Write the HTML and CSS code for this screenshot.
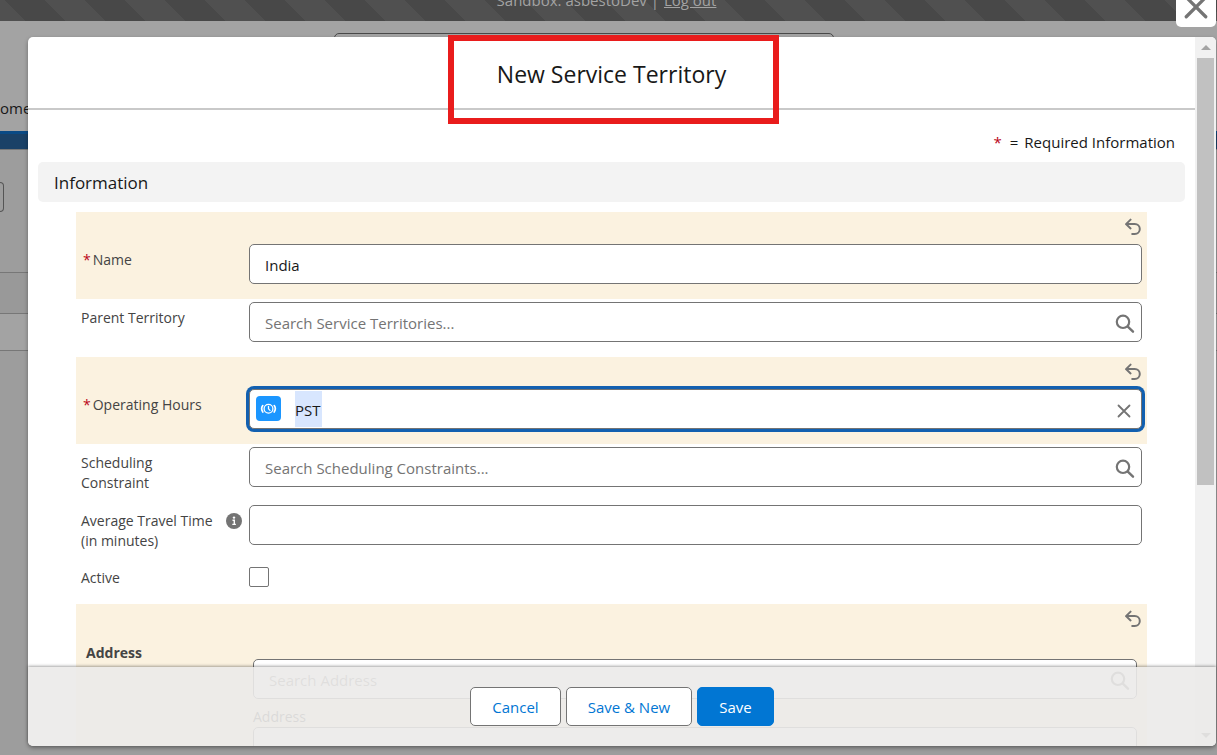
FILE: index.html
```html
<!DOCTYPE html>
<html lang="en">
<head>
<meta charset="utf-8">
<meta name="viewport" content="width=device-width, initial-scale=1">
<title>New Service Territory</title>
<link rel="stylesheet" href="styles.css">
</head>
<body>
<svg class="defs" width="0" height="0" aria-hidden="true">
  <symbol id="i-undo" viewBox="0 0 18 18"><path d="M6.600 1.600 2 6.100l4.600 4.300M2.500 6h8.300a4.900 4.900 0 0 1 0 10H8.200" fill="none" stroke="currentColor" stroke-width="2" stroke-linecap="round" stroke-linejoin="round"/></symbol>
  <symbol id="i-search" viewBox="0 0 20 20"><circle cx="8" cy="7.800" r="6.200" fill="none" stroke="currentColor" stroke-width="2.200"/><path d="m12.800 12.600 5.200 5.100" fill="none" stroke="currentColor" stroke-width="2.400" stroke-linecap="round"/></symbol>
  <symbol id="i-close" viewBox="0 0 24 24"><path d="m3 3 18 18M21 3 3 21" fill="none" stroke="currentColor" stroke-width="3" stroke-linecap="round"/></symbol>
  <symbol id="i-clear" viewBox="0 0 14 14"><path d="m1.500 1.500 11 11M12.500 1.500l-11 11" fill="none" stroke="currentColor" stroke-width="1.800" stroke-linecap="round"/></symbol>
</svg>

<div class="page">
  <div class="banner">Sandbox: asbestoDev | <a href="#">Log out</a></div>
  <div class="topbar">
    <div class="searchbox"></div>
    <div class="tab">ome</div>
  </div>
  <div class="ribbon"></div>
  <div class="content">
    <div class="pill"></div>
    <div class="band"></div>
    <div class="band band-light"></div>
  </div>
</div>

<button class="dismiss" type="button" aria-label="Close"><svg width="26" height="26"><use href="#i-close"/></svg></button>

<form class="modal" role="dialog" aria-labelledby="title">
  <div class="scroller">
    <div class="pane">
      <header class="head">
        <h1 id="title">New Service Territory</h1>
      </header>
      <p class="required"><span class="star">*</span><span>=</span><span>Required Information</span></p>
      <h2 class="section">Information</h2>

      <div class="rows">
        <div class="row changed">
          <label class="label" for="name"><span class="star">*</span>Name</label>
          <div class="field"><input class="box" id="name" type="text" value="India"></div>
          <button class="undo" type="button" aria-label="Undo Name"><svg width="18" height="18"><use href="#i-undo"/></svg></button>
        </div>
        <div class="row">
          <label class="label" for="parent">Parent Territory</label>
          <div class="field"><input class="box" id="parent" type="text" placeholder="Search Service Territories..."><svg class="glass" width="20" height="20"><use href="#i-search"/></svg></div>
        </div>
        <div class="row changed">
          <label class="label" for="hours"><span class="star">*</span>Operating Hours</label>
          <div class="field">
            <input class="box picked" id="hours" type="text" value="PST">
            <svg class="badge" width="25" height="25" viewBox="0 0 25 25" aria-hidden="true">
              <rect width="25" height="25" rx="4" fill="#1b96ff"/>
              <g fill="none" stroke="#fff" stroke-width="1.300" stroke-linecap="round" stroke-linejoin="round"><circle cx="12.500" cy="12.800" r="4.400"/><path d="M12.500 10.400v2.500l1.500 1.500"/><path d="M6.800 9.600q-2.300 3.200 0 6.400M18.200 9.600q2.300 3.200 0 6.400" stroke-width="1.700"/></g>
            </svg>
            <button class="clear" type="button" aria-label="Clear"><svg width="14" height="14"><use href="#i-clear"/></svg></button>
          </div>
          <button class="undo" type="button" aria-label="Undo Operating Hours"><svg width="18" height="18"><use href="#i-undo"/></svg></button>
        </div>
        <div class="row">
          <label class="label" for="constraint">Scheduling<br>Constraint</label>
          <div class="field"><input class="box" id="constraint" type="text" placeholder="Search Scheduling Constraints..."><svg class="glass" width="20" height="20"><use href="#i-search"/></svg></div>
        </div>
        <div class="row">
          <label class="label" for="travel">Average Travel Time<br>(in minutes)</label>
          <svg class="info" width="16" height="16" viewBox="0 0 16 16" aria-hidden="true"><circle cx="8" cy="8" r="8" fill="#747474"/><circle cx="8" cy="4.600" r="1.200" fill="#fff"/><path d="M6.500 7.300h1.800v4M6.300 11.400h3.600" fill="none" stroke="#fff" stroke-width="1.400"/></svg>
          <div class="field"><input class="box" id="travel" type="text"></div>
        </div>
        <div class="row short">
          <label class="label" for="active">Active</label>
          <div class="field"><input class="check" id="active" type="checkbox"></div>
        </div>
        <div class="row changed address">
          <div class="label group">Address</div>
          <div class="field stack">
            <div class="field"><input class="box" type="text" aria-label="Search Address" placeholder="Search Address"><svg class="glass" width="20" height="20"><use href="#i-search"/></svg></div>
            <label class="sublabel" for="street">Address</label>
            <textarea class="box area" id="street"></textarea>
          </div>
          <button class="undo" type="button" aria-label="Undo Address"><svg width="18" height="18"><use href="#i-undo"/></svg></button>
        </div>
      </div>
    </div>
    <div class="bar" aria-hidden="true">
      <div class="arrow up"></div>
      <div class="track"><div class="thumb"></div></div>
      <div class="arrow down"></div>
    </div>
  </div>
  <div class="marker"></div>
  <footer class="foot">
    <button class="btn" type="button">Cancel</button>
    <button class="btn" type="button">Save &amp; New</button>
    <button class="btn brand" type="button">Save</button>
  </footer>
</form>
</body>
</html>
```
FILE: styles.css
```css
* { box-sizing: border-box; }
html, body { height: 100%; }
body {
  margin: 0;
  overflow: hidden;
  position: relative;
  background: #9d9d9d;
  color: #181818;
  font: 15px/20px "Open Sans", "Noto Sans", sans-serif;
}
h1, h2, p { margin: 0; font-weight: 400; }
button, input, textarea { font: inherit; color: inherit; }
button { cursor: pointer; }
.defs { position: absolute; }

/* Page behind the dialog */
.page { height: 100%; display: flex; flex-direction: column; }
.banner {
  height: 21px;
  display: flex;
  justify-content: center;
  align-items: flex-end;
  gap: 5px;
  padding: 0 4px 11px 0;
  color: #a3a3a3;
  background: linear-gradient(45deg, #484848 25%, #505050 25%, #505050 50%, #484848 50%, #484848 75%, #505050 75%) 5px 0 / 80px 80px;
}
.banner a { color: inherit; }
.topbar { height: 110px; padding-top: 12px; background: #a3a3a3; }
.searchbox {
  width: 500px;
  max-width: 80%;
  height: 40px;
  margin: 0 auto 25px;
  position: relative;
  left: -25px;
  border: 1px solid #484848;
  border-radius: 5px;
}
.ribbon { height: 19px; background: #1a4167; border-top: 3px solid #0a4a85; border-bottom: 1px solid #777; }
.content { flex: 1; padding-top: 32px; }
.pill { width: 4px; height: 30px; border: 1px solid #555; border-left: 0; border-radius: 0 5px 5px 0; }
.band { height: 41px; margin-top: 60px; border-top: 1px solid #777; background: #999; }
.band-light { height: 38px; margin-top: 0; border-bottom: 1px solid #777; background: #a3a3a3; }

/* Dialog */
.dismiss {
  position: absolute;
  top: -13px;
  right: 1px;
  width: 40px;
  height: 40px;
  padding: 0;
  display: grid;
  place-items: center;
  border: 0;
  border-radius: 5px;
  background: #fff;
  color: #747474;
}
.modal {
  position: absolute;
  inset: 37px 1px 9px 28px;
  border-radius: 5px;
  background: #fff;
  box-shadow: 0 2px 4px rgba(0, 0, 0, .35);
}
.scroller { height: 100%; display: flex; overflow: hidden; border-radius: 5px; }
.pane { flex: 1; min-width: 0; }
.head { padding: 20px 0 17px; border-bottom: 2px solid #c9c9c9; text-align: center; }
.head h1 { font-size: 23px; line-height: 34px; }
.marker {
  position: absolute;
  top: -2px;
  left: 50%;
  width: 331px;
  height: 89px;
  margin-left: -174px;
  border: 6px solid #e91c1c;
  pointer-events: none;
}
.required { display: flex; justify-content: flex-end; gap: 6px; padding: 22px 20px 10px; }
.star { color: #ba0517; margin-right: 2px; }
.section {
  margin: 0 10px 10px;
  padding: 11px 16px 9px;
  border-radius: 5px;
  background: #f3f3f3;
  font-size: 17px;
  line-height: 20px;
}
.rows { margin: 0 48px; }
.row { position: relative; display: flex; align-items: flex-start; padding: 3px 5px 15px; }
.row.changed { padding-top: 32px; background: #fbf2e0; }
.row.short { padding-top: 7px; padding-bottom: 17px; }
.label { flex: 0 0 168px; padding-top: 6px; margin-bottom: -10px; font-size: 14px; color: #444; }
.short .label { padding-top: 1px; }
.changed .label { padding-left: 2px; }
.field { flex: 1; min-width: 0; position: relative; display: flex; }
.box {
  width: 100%;
  height: 40px;
  padding: 1px 15px 0;
  border: 1px solid #747474;
  border-radius: 5px;
  background: #fff;
  outline: 0;
}
.box::placeholder { color: #747474; opacity: 1; }
.box.picked {
  padding-left: 45px;
  box-shadow: 0 0 0 3px #1260b0;
  background: linear-gradient(#d8e6fe, #d8e6fe) 45px 1px / 27px 36px no-repeat #fff;
}
.glass { position: absolute; right: 7px; top: 12px; color: #747474; }
.badge { position: absolute; left: 7px; top: 7px; }
.clear, .undo { display: grid; padding: 0; border: 0; background: none; color: #747474; position: absolute; }
.clear { right: 11px; top: 15px; }
.undo { right: 5px; top: 6px; }
.info { position: absolute; left: 150px; top: 11px; }
.check {
  appearance: none;
  width: 20px;
  height: 20px;
  margin: 0;
  border: 1px solid #747474;
  border-radius: 2px;
  background: #fff;
}
.row.address { padding-top: 55px; padding-right: 10px; }
.address .label { flex-basis: 172px; padding: 0 0 0 5px; margin-top: -16px; }
.group { font-weight: 700; }
.stack { flex-direction: column; }
.stack > .field { flex: none; }
.sublabel { margin: 8px 0 0; font-size: 14px; color: #444; }
.area { height: 80px; resize: none; }

/* Scroll bar */
.bar { width: 21px; flex: none; display: flex; flex-direction: column; background: #f1f1f1; }
.arrow { height: 21px; display: grid; place-items: center; }
.arrow::before { content: ""; border: 5px solid transparent; }
.up::before { border-top: 0; border-bottom-color: #a3a3a3; }
.down::before { border-bottom: 0; border-top-color: #747474; }
.track { flex: 1; padding: 0 2px; }
.thumb { height: 64%; background: #c1c1c1; }

.foot {
  position: absolute;
  inset: auto 0 0;
  display: flex;
  justify-content: center;
  gap: 5px;
  padding: 20px;
  border-radius: 0 0 5px 5px;
  background: rgba(235, 234, 233, .9);
  box-shadow: 0 -1px 3px rgba(0, 0, 0, .35);
}
.btn {
  padding: 9px 21px 8px;
  border: 1px solid #747474;
  border-radius: 5px;
  background: #fff;
  color: #0176d3;
  line-height: 20px;
}
.btn.brand { border-color: #0176d3; background: #0176d3; color: #fff; }
```
